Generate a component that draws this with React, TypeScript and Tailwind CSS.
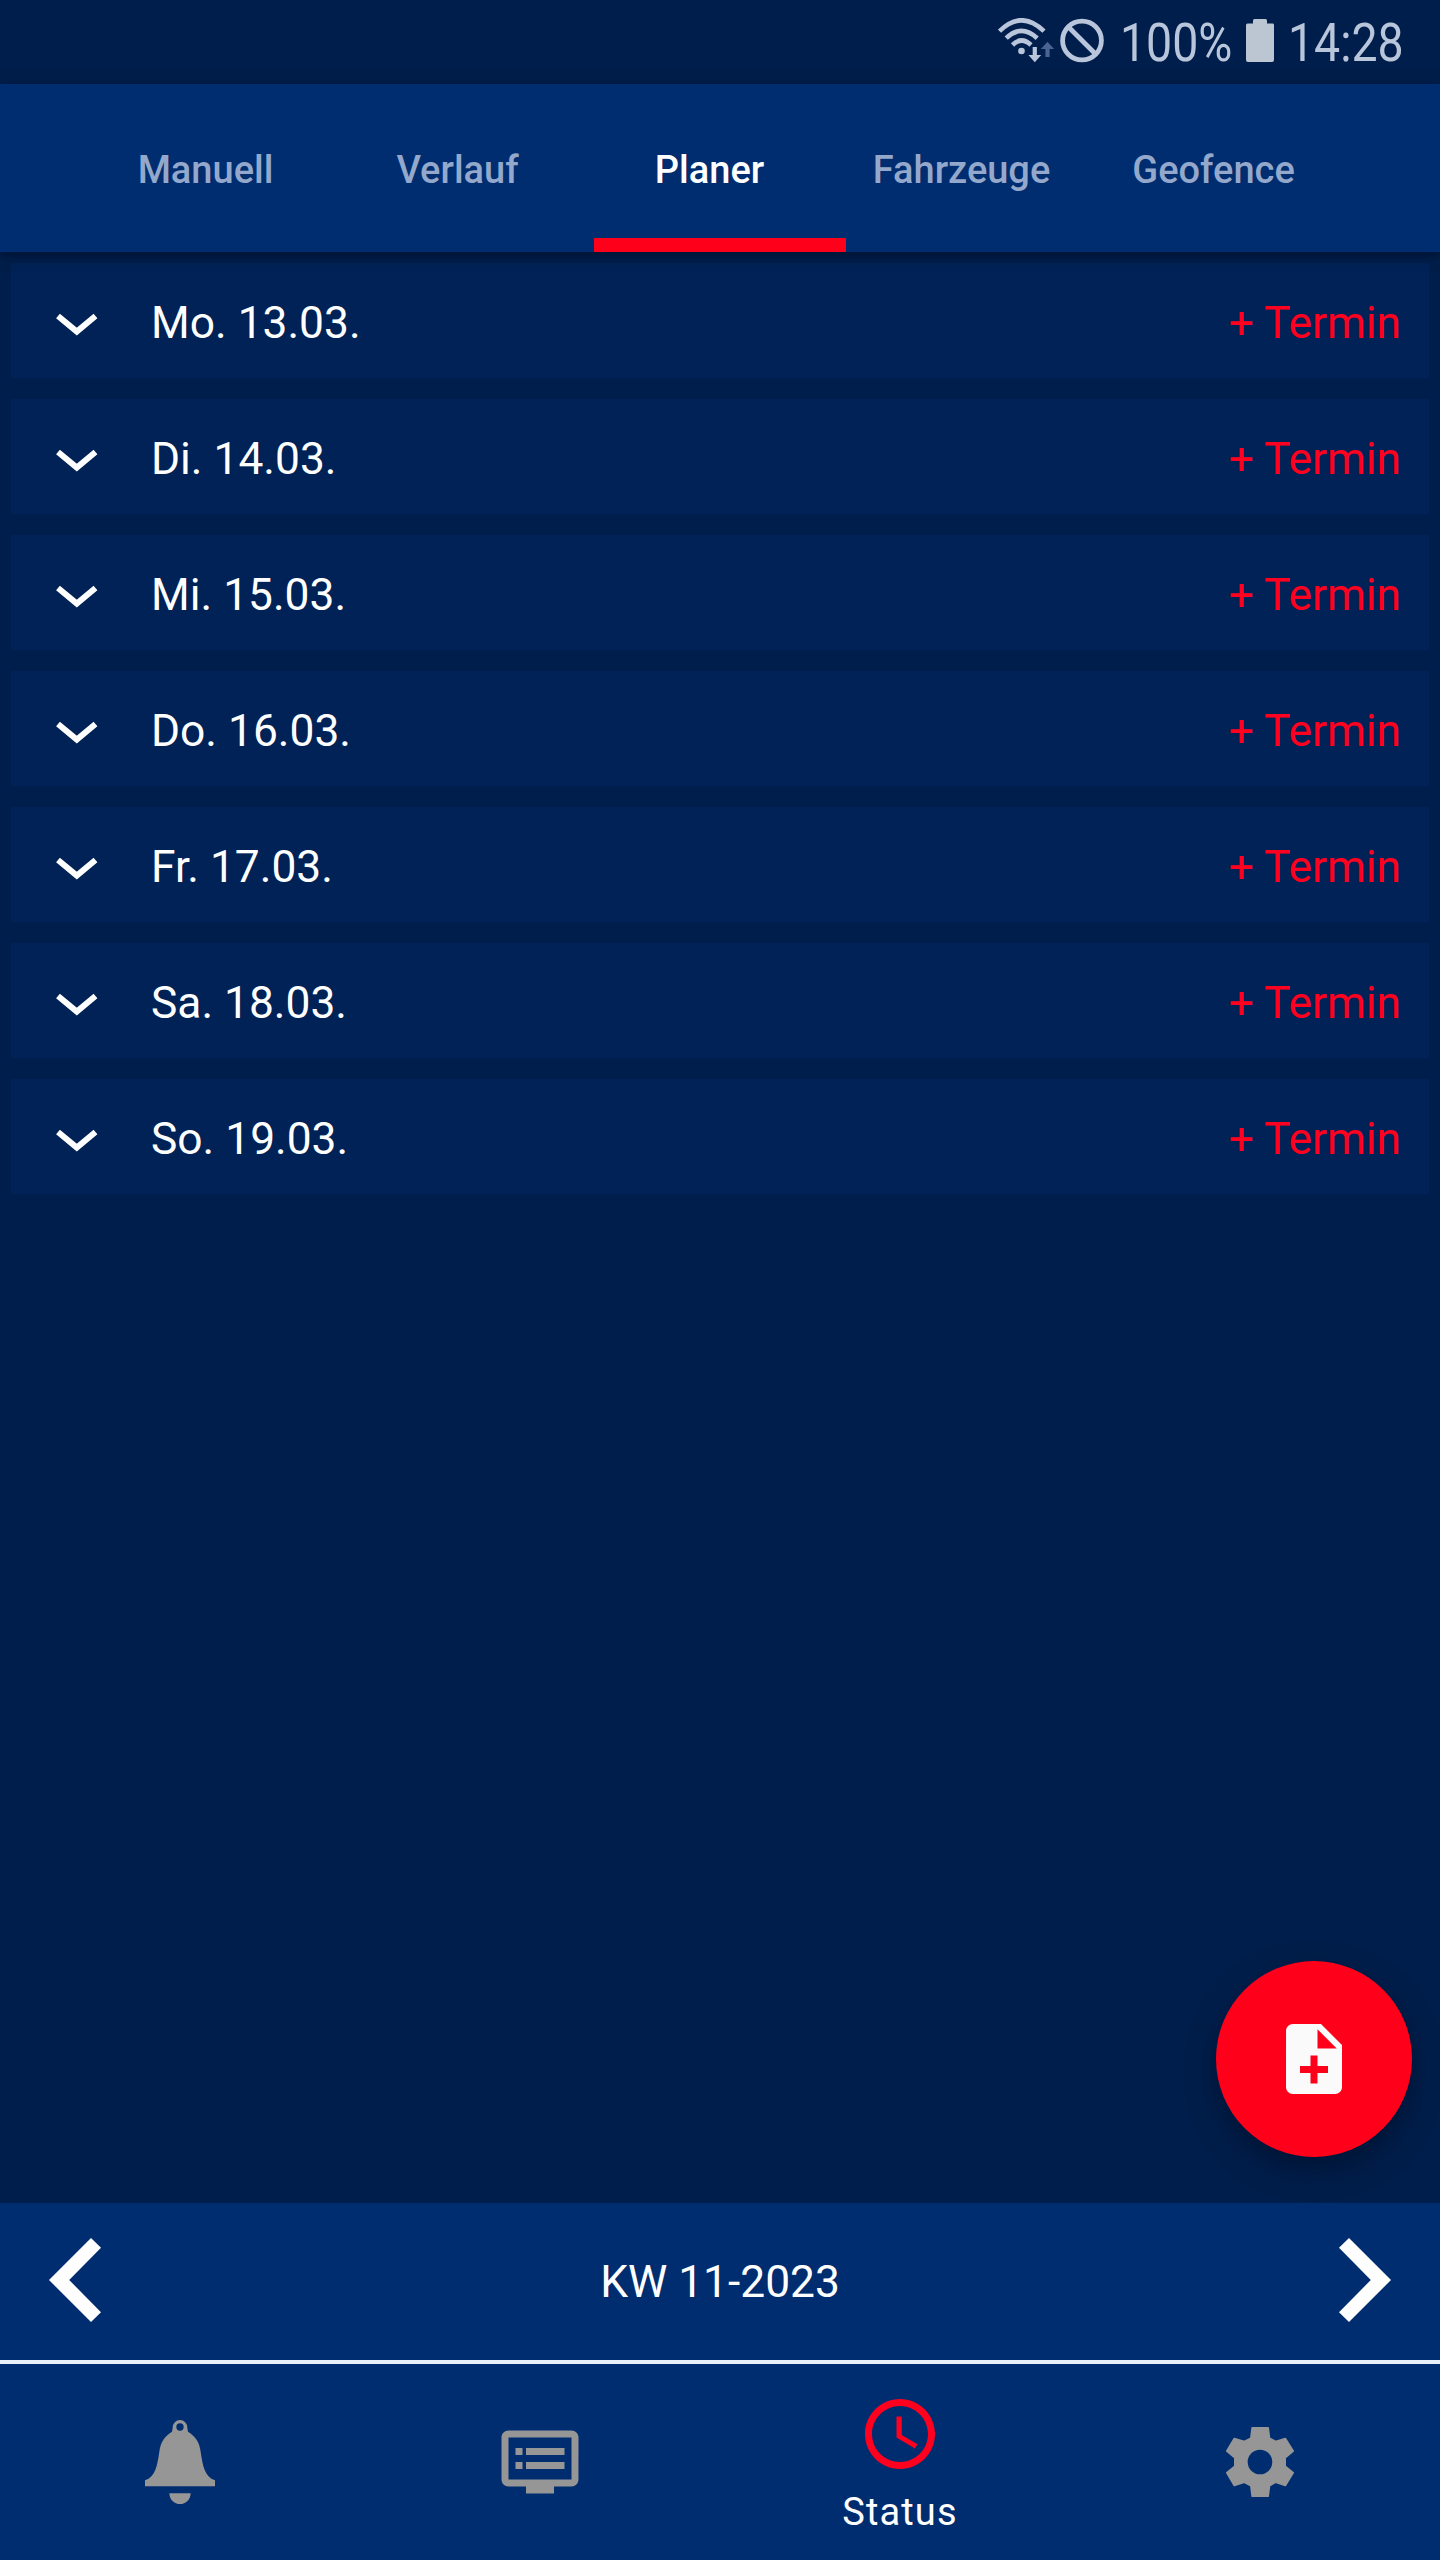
import { MdAccessTime, MdDvr, MdNoteAdd } from "react-icons/md";

type day = {
  label: string;
  date: string;
};

const tabs = ["Manuell", "Verlauf", "Planer", "Fahrzeuge", "Geofence"];

const days: day[] = [
  { label: "Mo.", date: "13.03." },
  { label: "Di.", date: "14.03." },
  { label: "Mi.", date: "15.03." },
  { label: "Do.", date: "16.03." },
  { label: "Fr.", date: "17.03." },
  { label: "Sa.", date: "18.03." },
  { label: "So.", date: "19.03." },
];

const App = () => {
  return (
    <div className="relative w-[1440px] h-[2560px] flex flex-col overflow-hidden bg-[#001e4b] text-white font-['Roboto',sans-serif]">
      <StatusBar />
      <TabBar active="Planer" />
      <main className="flex-1 flex flex-col gap-[21px] pt-[11px] px-[11px]">
        {days.map((d) => (
          <DayRow key={d.label} day={d} />
        ))}
      </main>
      <WeekPager />
      <BottomNav />
      <button className="absolute left-[1216px] top-[1961px] size-[196px] rounded-full bg-[#ff001a] flex items-center justify-center shadow-[0_12px_28px_rgba(0,10,30,0.5)]">
        <MdNoteAdd className="size-[84px] text-[#fafafa]" />
      </button>
    </div>
  );
};

export default App;

const StatusBar = () => (
  <div className="h-[84px] shrink-0 flex items-start pl-[998px] text-[#b9c5da]">
    <WifiIcon />
    <BlockedIcon />
    <div className="w-[126px] h-[84px] ml-[15px] pt-[2px] flex items-center">
      <span className="text-[54px] leading-none origin-left scale-x-[0.86] whitespace-nowrap">
        100%
      </span>
    </div>
    <BatteryIcon />
    <div className="h-[84px] ml-[14px] pt-[2px] flex items-center">
      <span className="text-[54px] leading-none origin-left scale-x-[0.86] whitespace-nowrap">
        14:28
      </span>
    </div>
  </div>
);

const TabBar = ({ active }: { active: string }) => (
  <nav className="relative z-10 h-[168px] shrink-0 flex px-[90px] bg-[#002d70] shadow-[0_3px_12px_rgba(0,10,30,0.6)]">
    {tabs.map((tab) => (
      <button
        key={tab}
        className={
          tab === active
            ? "w-[252px] flex items-center justify-center pr-[21px] pt-[19px] border-b-[14px] border-[#ff001a] text-[38px] font-medium text-white"
            : "w-[252px] flex items-center justify-center pr-[21px] pt-[19px] border-b-[14px] border-transparent text-[38px] font-medium text-[#94a8cb]"
        }
      >
        {tab}
      </button>
    ))}
  </nav>
);

const DayRow = ({ day }: { day: day }) => (
  <section className="h-[115px] flex items-center pl-[44px] pr-[28px] pt-[6px] bg-[#002256] text-[44.3px]">
    <ChevronDown />
    <h2 className="ml-[52px] flex-1">
      {day.label} {day.date}
    </h2>
    <button className="text-[#ff001f]">+ Termin</button>
  </section>
);

const WeekPager = () => (
  <div className="h-[157px] shrink-0 flex items-center justify-between px-[49px] pb-[4px] bg-[#002d70]">
    <ChevronLarge />
    <span className="pt-[5px] text-[44.3px]">KW 11-2023</span>
    <ChevronLarge className="rotate-180" />
  </div>
);

const BottomNav = () => (
  <nav className="h-[200px] shrink-0 grid grid-cols-4 border-t-4 border-[#e8f0fb] bg-[#002d70] text-[#969696]">
    <button className="flex items-center justify-center">
      <BellIcon />
    </button>
    <button className="flex items-center justify-center">
      <MdDvr className="size-[84px]" />
    </button>
    <button className="flex flex-col items-center pt-[28px] text-[#ff001f]">
      <MdAccessTime className="size-[84px]" />
      <span className="mt-[13px] text-[38px] leading-[46px] tracking-[1.1px] text-white">
        Status
      </span>
    </button>
    <button className="flex items-center justify-center">
      <GearIcon />
    </button>
  </nav>
);

const WifiIcon = () => (
  <svg className="w-[58px] h-[48px] mt-[18px]" viewBox="0 0 58 48">
    <g fill="none" stroke="currentColor" strokeWidth="4.6">
      <path d="M1.5 13.2Q23.5 -8.5 46 13.2" />
      <path d="M8.2 20.2Q23.5 5.5 39.2 20.2" />
      <path d="M14.5 27Q23.5 18 33 27" />
    </g>
    <circle cx="23.5" cy="33" r="3.3" fill="currentColor" />
    <path
      d="M34.7 29h4.2v8h4.3l-6.4 7.300-6.400-7.300h4.300z"
      fill="currentColor"
    />
    <path d="M47.4 39h4.200v-8h4.500l-6.600-7.300-6.600 7.300h4.500z" fill="#4a6390" />
  </svg>
);

const BlockedIcon = () => (
  <svg className="size-[46px] mt-[17px] ml-[3px]" viewBox="0 0 46 46">
    <g fill="none" stroke="currentColor" strokeWidth="4.8">
      <circle cx="23" cy="23.5" r="19.4" />
      <path d="M9.500 10l27 27" />
    </g>
  </svg>
);

const BatteryIcon = () => (
  <svg
    className="w-[28px] h-[43px] mt-[19px] text-[#bcc5d2]"
    viewBox="0 0 28 43"
  >
    <path
      d="M8.500 0h11a1.500 1.500 0 0 1 1.500 1.500V4.500h5.500a1.500 1.500 0 0 1 1.500 1.500v35a2 2 0 0 1-2 2H2a2 2 0 0 1-2-2V6a1.500 1.500 0 0 1 1.500-1.500H7V1.500A1.500 1.500 0 0 1 8.500 0z"
      fill="currentColor"
    />
  </svg>
);

const ChevronDown = () => (
  <svg className="w-[44px] h-[26px]" viewBox="0 0 44 26">
    <path
      d="M3 5L21.8 20.500 40.500 5"
      fill="none"
      stroke="currentColor"
      strokeWidth="6"
    />
  </svg>
);

const ChevronLarge = ({ className }: { className?: string }) => (
  <svg
    className={className ? `w-[52px] h-[84px] ${className}` : "w-[52px] h-[84px]"}
    viewBox="0 0 52 84"
  >
    <path d="M42 0l10 9.700L20.200 42 52 74.300 42 84 0 42z" fill="currentColor" />
  </svg>
);

const BellIcon = () => (
  <svg className="w-[70px] h-[84px]" viewBox="435 720 210 252">
    <path
      fillRule="evenodd"
      fill="currentColor"
      d="M518 743a22 23 0 0 1 44 0L564 755C586 769 598 785 602 815C608 855 613 890 645 901V919H435V901C467 890 472 855 478 815C482 785 494 769 516 755ZM540 730a11 11 0 1 0 0 22a11 11 0 1 0 0-22Z"
    />
    <path d="M508 940h64a32 32 0 0 1-64 0z" fill="currentColor" />
  </svg>
);

const GearIcon = () => (
  <svg className="w-[70px] h-[70px]" viewBox="375 741 210 210">
    <path
      fillRule="evenodd"
      fill="currentColor"
      stroke="currentColor"
      strokeWidth="6"
      strokeLinejoin="round"
      d="M457 744H504L508 775L527 785L556 776L579 813L555 833V859L579 878L556 916L527 906L508 917L504 948H457L453 917L433 906L403 916L381 878L405 859V833L381 813L403 776L433 785L453 775ZM480 806a40 40 0 1 0 0 80a40 40 0 1 0 0-80Z"
    />
  </svg>
);
